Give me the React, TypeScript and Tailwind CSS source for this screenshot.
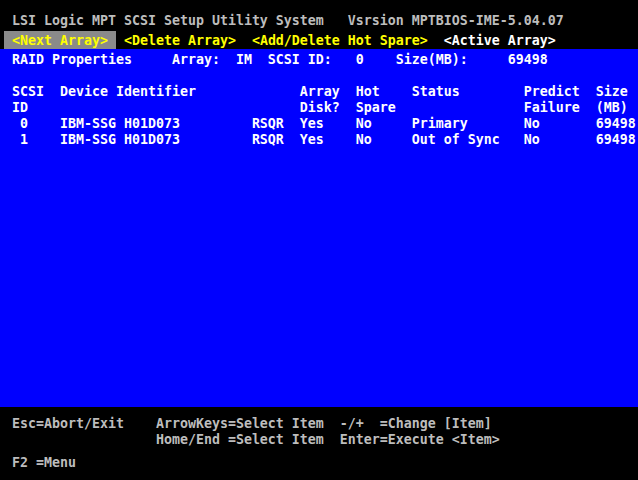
const MENU: { label: string; tone: 'sel' | 'yellow' | 'white' }[] = [
  { label: ' <Next Array> ', tone: 'sel' },
  { label: ' <Delete Array> ', tone: 'yellow' },
  { label: ' <Add/Delete Hot Spare> ', tone: 'yellow' },
  { label: ' <Active Array> ', tone: 'white' },
]

const RAID_LINE = ' RAID Properties     Array:  IM  SCSI ID:   0    Size(MB):     69498'

const TABLE = [
  ' SCSI  Device Identifier             Array  Hot    Status        Predict  Size',
  ' ID                                  Disk?  Spare                Failure  (MB)',
  '  0    IBM-SSG H01D073         RSQR  Yes    No     Primary       No       69498',
  '  1    IBM-SSG H01D073         RSQR  Yes    No     Out of Sync   No       69498',
]

const FOOTER = [
  ' Esc=Abort/Exit    ArrowKeys=Select Item  -/+  =Change [Item]',
  '                   Home/End =Select Item  Enter=Execute <Item>',
]

function Line({ text, className = '' }: { text: string; className?: string }) {
  return <div className={`h-[16px] pt-[1px] leading-[16px] whitespace-pre ${className}`}>{text}</div>
}

export default function App() {
  return (
    <div
      className="w-[638px] h-[480px] overflow-hidden bg-black flex flex-col text-[13.29px] font-bold"
      style={{ fontFamily: '"DejaVu Sans Mono", "Liberation Mono", monospace' }}
    >
      <div className="pt-[12px] pl-[4px] text-[#bdbdbd]">
        <Line text=" LSI Logic MPT SCSI Setup Utility System   Vsrsion MPTBIOS-IME-5.04.07" />
      </div>

      <div className="mt-[3px] pl-[4px] h-[18px] flex">
        {MENU.map((m) => (
          <span
            key={m.label}
            className={
              'pt-[1px] leading-[18px] whitespace-pre ' +
              (m.tone === 'sel'
                ? 'bg-[#8a8a8a] text-[#ffff00]'
                : m.tone === 'yellow'
                  ? 'text-[#ffff00]'
                  : 'text-white')
            }
          >
            {m.label}
          </span>
        ))}
      </div>

      <div className="h-[358px] bg-[#0000ff] pl-[4px] pt-[2px] text-white">
        <Line text={RAID_LINE} />
        <div className="mt-[16px]">
          {TABLE.map((t, i) => (
            <Line key={i} text={t} />
          ))}
        </div>
      </div>

      <div className="pl-[4px] pt-[8px] text-[#bdbdbd]">
        {FOOTER.map((t, i) => (
          <Line key={i} text={t} />
        ))}
        <Line className="mt-[7px]" text=" F2 =Menu" />
      </div>
    </div>
  )
}
